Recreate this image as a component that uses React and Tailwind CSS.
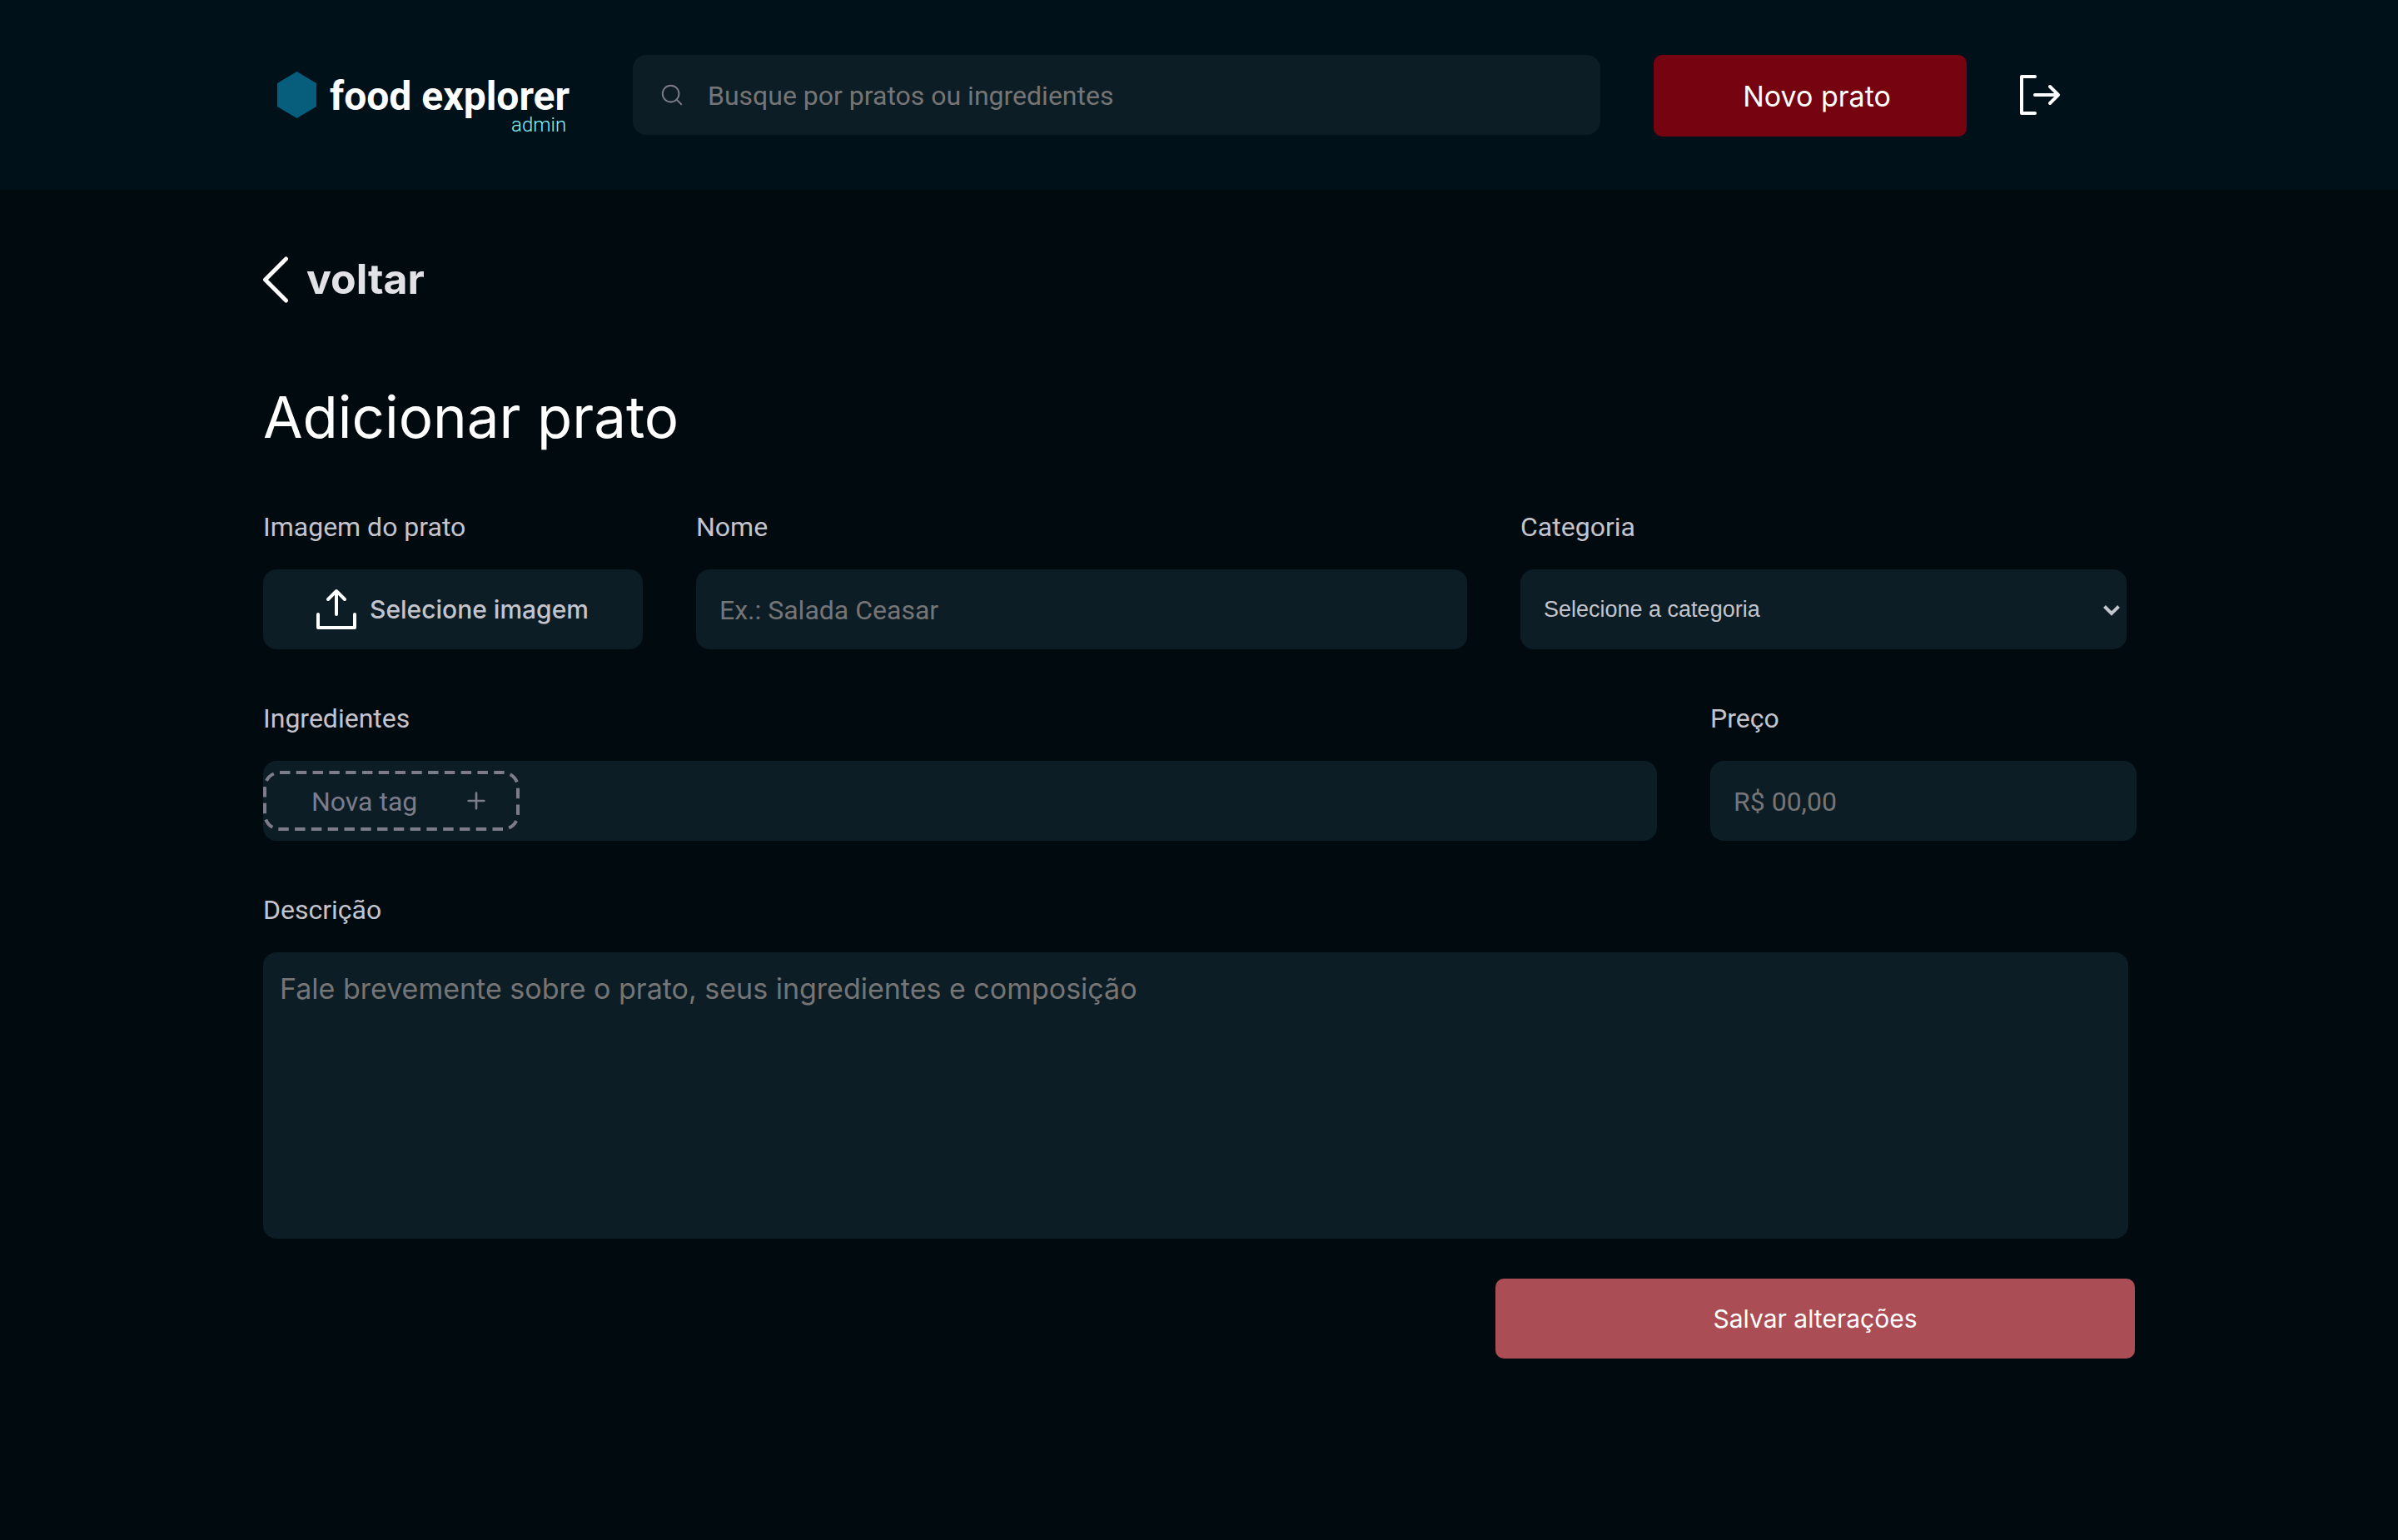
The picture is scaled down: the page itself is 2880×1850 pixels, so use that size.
const field =
  "h-24 w-full rounded-2xl bg-[#0D1D25] px-7 pt-px font-[Roboto,sans-serif] text-[32px] text-[#C4C4CC] placeholder:text-[#757575] outline-none";
const label = "text-[32px] leading-[42px] text-[#C4C4CC]";

function SearchIcon() {
  return (
    <svg viewBox="0 0 256 256" className="size-[30px] shrink-0 text-[#7C7C8A]" fill="none" stroke="currentColor" strokeWidth="16" strokeLinecap="round" aria-hidden="true">
      <circle cx="116" cy="116" r="84" />
      <path d="M175.4 175.4 224 224" />
    </svg>
  );
}

function SignOutIcon() {
  return (
    <svg viewBox="0 0 256 256" className="size-16" fill="currentColor" aria-hidden="true">
      <path d="M120,216a8,8,0,0,1-8,8H48a8,8,0,0,1-8-8V40a8,8,0,0,1,8-8h64a8,8,0,0,1,0,16H56V208h56A8,8,0,0,1,120,216Zm109.66-93.66-40-40a8,8,0,0,0-11.32,11.32L204.69,120H112a8,8,0,0,0,0,16h92.69l-26.35,26.34a8,8,0,0,0,11.32,11.32l40-40A8,8,0,0,0,229.66,122.34Z" />
    </svg>
  );
}

function UploadIcon() {
  return (
    <svg viewBox="0 0 256 256" className="mt-1 size-16 shrink-0 text-white" fill="currentColor" aria-hidden="true">
      <path d="M224,144v64a8,8,0,0,1-8,8H40a8,8,0,0,1-8-8V144a8,8,0,0,1,16,0v56H208V144a8,8,0,0,1,16,0ZM93.66,77.66,120,51.31V144a8,8,0,0,0,16,0V51.31l26.34,26.35a8,8,0,0,0,11.32-11.32l-40-40a8,8,0,0,0-11.32,0l-40,40A8,8,0,0,0,93.66,77.66Z" />
    </svg>
  );
}

function Header() {
  return (
    <header className="flex h-[228px] items-start bg-[#00111A] pt-[66px] pr-[400px] pl-[332px]">
      <a href="#" className="flex w-[352px] shrink-0 items-start gap-4 pt-5">
        <svg viewBox="0 0 48 56" className="h-14 w-12 shrink-0" aria-hidden="true">
          <path d="M24.500 0 48 14V42L24.500 56 1 42V14Z" fill="#065E7C" />
        </svg>
        <span className="flex flex-col items-end pt-1">
          <span className="text-5xl leading-[52px] font-bold whitespace-nowrap text-white">food explorer</span>
          <span className="pr-1 text-2xl leading-4 font-light text-[#82F3FF]">admin</span>
        </span>
      </a>
      <label className="ml-[76px] flex h-24 min-w-0 flex-1 items-center gap-7 rounded-2xl bg-[#0D1D25] pl-8">
        <SearchIcon />
        <input
          type="search"
          aria-label="Buscar"
          placeholder="Busque por pratos ou ingredientes"
          className="h-full min-w-0 flex-1 bg-transparent pt-px text-[32px] text-[#C4C4CC] outline-none placeholder:text-[#757575]"
        />
      </label>
      <button type="button" className="ml-16 h-[98px] w-[376px] shrink-0 rounded-[10px] bg-[#750310] pl-4 font-[Inter,sans-serif] text-[34px] text-white">
        Novo prato
      </button>
      <button type="button" aria-label="Sair" className="mt-4 ml-[54px] shrink-0 text-white">
        <SignOutIcon />
      </button>
    </header>
  );
}

export default function App() {
  return (
    <div className="min-h-screen bg-[#000A0F] font-[Roboto,sans-serif]">
      <Header />
      <main className="pr-[314px] pl-[316px]">
        <a href="#" className="flex w-fit items-center gap-[22px] pt-20 text-white">
          <svg viewBox="72 40 96 176" className="h-14 w-[30px]" fill="none" stroke="currentColor" strokeWidth="16" strokeLinecap="round" strokeLinejoin="round" aria-hidden="true">
            <path d="M160 208 80 128l80-80" />
          </svg>
          <span className="pb-[2px] font-[Inter,sans-serif] text-[50px] leading-[54px] font-bold text-[#E1E1E6]">voltar</span>
        </a>
        <h1 className="pt-24 font-[Inter,sans-serif] text-[69px] leading-[82px] text-white">Adicionar prato</h1>

        <form className="pt-[70px]">
          <div className="grid grid-cols-[456fr_926fr_728fr] gap-16 pr-3">
            <div className="flex flex-col gap-[30px]">
              <span className={label}>Imagem do prato</span>
              <label className="flex h-24 w-full cursor-pointer items-center gap-2 rounded-2xl bg-[#0D1D25] pl-14">
                <UploadIcon />
                <span className="font-[Inter,sans-serif] text-[30px] font-medium whitespace-nowrap text-[#C4C4CC]">Selecione imagem</span>
                <input type="file" className="sr-only" />
              </label>
            </div>
            <div className="flex flex-col gap-[30px]">
              <label htmlFor="nome" className={label}>Nome</label>
              <input id="nome" type="text" placeholder="Ex.: Salada Ceasar" className={field} />
            </div>
            <div className="flex flex-col gap-[30px]">
              <label htmlFor="categoria" className={label}>Categoria</label>
              <div className="relative">
                <select id="categoria" defaultValue="" className="block h-24 w-full appearance-none rounded-2xl bg-[#0D1D25] px-7 font-[Liberation_Sans,sans-serif] text-[27px] text-[#C4C4CC] outline-none">
                  <option value="">Selecione a categoria</option>
                </select>
                <svg viewBox="0 0 20 13" className="pointer-events-none absolute top-[43px] right-2 h-[13px] w-5 text-[#C4C4CC]" fill="none" stroke="currentColor" strokeWidth="4" aria-hidden="true">
                  <path d="m1.5 1.5 8.5 8.5 8.5-8.5" />
                </svg>
              </div>
            </div>
          </div>

          <div className="grid grid-cols-[1674fr_512fr] gap-16 pt-[62px]">
            <div className="flex flex-col gap-[30px]">
              <label htmlFor="tag" className={label}>Ingredientes</label>
              <div className="flex h-24 items-center rounded-2xl bg-[#0D1D25]">
                <div className="relative flex h-[72px] w-[308px] items-center pl-[58px] text-[#7C7C8A]">
                  <svg viewBox="0 0 308 72" className="pointer-events-none absolute inset-0 size-full" fill="none" aria-hidden="true">
                    <rect x="2" y="2" width="304" height="68" rx="18" stroke="currentColor" strokeWidth="4" pathLength="720" strokeDasharray="12.6 7.4" />
                  </svg>
                  <input id="tag" type="text" placeholder="Nova tag" className="w-[182px] bg-transparent pt-px text-[32px] outline-none placeholder:text-[#7C7C8A]" />
                  <button type="button" aria-label="Adicionar tag">
                    <svg viewBox="0 0 24 24" className="size-8" fill="none" stroke="currentColor" strokeWidth="2" strokeLinecap="round" aria-hidden="true">
                      <path d="M12 5v14M5 12h14" />
                    </svg>
                  </button>
                </div>
              </div>
            </div>
            <div className="flex flex-col gap-[30px]">
              <label htmlFor="preco" className={label}>Preço</label>
              <input id="preco" type="text" placeholder="R$ 00,00" className={field} />
            </div>
          </div>

          <div className="flex flex-col gap-[30px] pt-[62px] pr-[10px]">
            <label htmlFor="descricao" className={label}>Descrição</label>
            <textarea
              id="descricao"
              placeholder="Fale brevemente sobre o prato, seus ingredientes e composição"
              className="block h-[344px] w-full resize-none rounded-2xl bg-[#0D1D25] px-5 py-5 font-[Inter,sans-serif] text-[34px] leading-12 text-[#C4C4CC] outline-none placeholder:text-[#757575]"
            />
          </div>

          <div className="flex justify-end pt-12 pr-[2px]">
            <button type="submit" className="h-24 w-[768px] rounded-[10px] bg-[#AB4D55] font-[Inter,sans-serif] text-[30px] text-white">
              Salvar alterações
            </button>
          </div>
        </form>
      </main>
    </div>
  );
}
